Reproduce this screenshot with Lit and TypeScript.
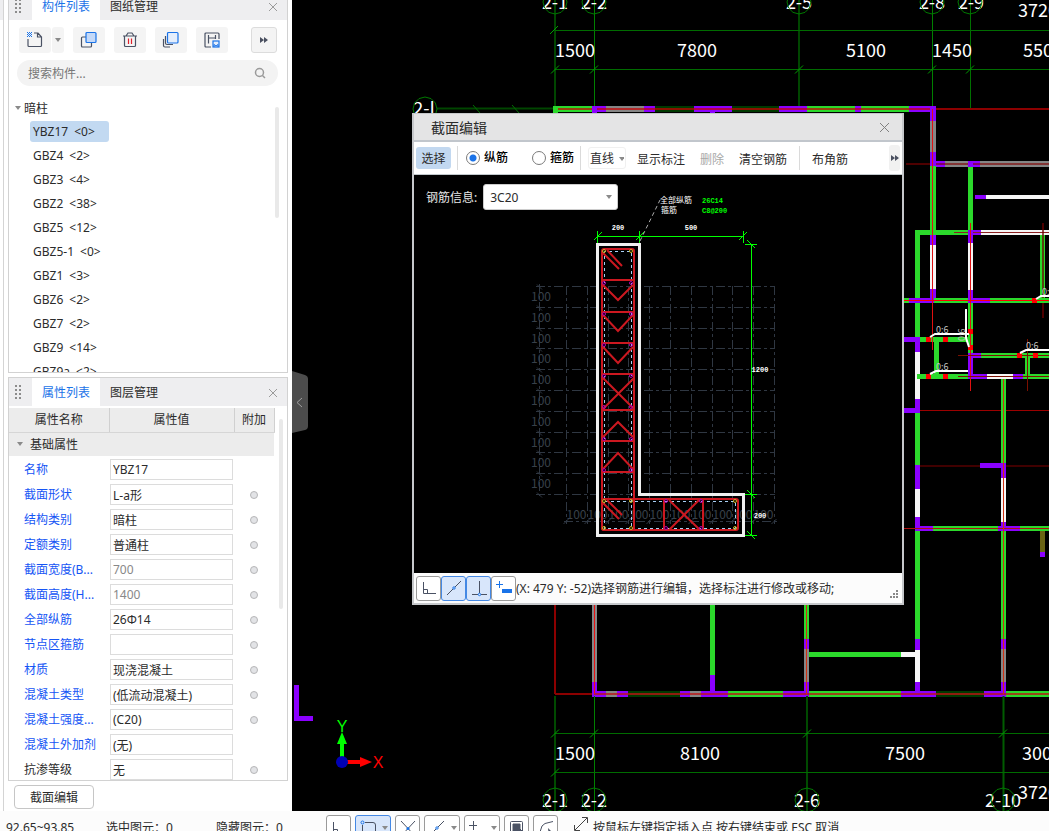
import { LitElement, html, svg, css, nothing } from "lit";
import { customElement, state } from "lit/decorators.js";
import { classMap } from "lit/directives/class-map.js";

const GREEN = "#2bd92b";
const PURPLE = "#8b00ff";
const WHITE = "#f6f6f6";
const GREY = "#858585";
const DARK = "#003a00";
const RED = "#ff0000";
const OLIVE = "#6a6414";

type Run = [number, number, string];

/** Horizontal wall band: runs of [x0, x1, colour] whose top edge is y. */
const hWall = (y: number, runs: Run[], t = 6) =>
  runs.map(([a, b, c]) => svg`<rect x=${a} y=${y} width=${b - a} height=${t} fill=${c}></rect>`);
/** Vertical wall band: runs of [y0, y1, colour] whose left edge is x. */
const vWall = (x: number, runs: Run[], t = 5) =>
  runs.map(([a, b, c]) => svg`<rect x=${x} y=${a} width=${t} height=${b - a} fill=${c}></rect>`);

const line = (x1: number, y1: number, x2: number, y2: number, c: string, w = 1) =>
  svg`<line x1=${x1} y1=${y1} x2=${x2} y2=${y2} stroke=${c} stroke-width=${w}></line>`;
const tick = (x: number, y: number, c = "#00a000") => line(x - 4, y + 4, x + 4, y - 4, c);
const bubble = (x: number, y: number) =>
  svg`<polygon fill="none" stroke="#007a00" points=${[0, 1, 2, 3, 4, 5, 6, 7, 8, 9, 10, 11]
    .map((i) => {
      const a = (Math.PI * i) / 6;
      return `${(x + 12 * Math.sin(a)).toFixed(1)},${(y + 12 * Math.cos(a)).toFixed(1)}`;
    })
    .join(" ")}></polygon>`;
const label = (x: number, y: number, t: string, anchor = "middle") =>
  svg`<text class="dim" x=${x} y=${y} text-anchor=${anchor}>${t}</text>`;

@customElement("plan-canvas")
export class PlanCanvas extends LitElement {
  static styles = css`
    :host { display: block; background: #000; overflow: hidden; }
    svg { display: block; width: 100%; height: 100%; }
    text { font-family: "Noto Sans CJK SC", sans-serif; }
    .dim { font-size: 18px; fill: #fff; }
    .note { font-size: 9px; fill: #c4c4c4; }
    .axis { font: 16px "Liberation Sans", sans-serif; }
  `;

  render() {
    return html`<svg role="img" aria-label="平面图">
      <g transform="translate(-292 0)">
        ${line(555, 0, 555, 110, "#004600", 2)} ${line(594.5, 0, 594.5, 110, "#008000")}
        ${line(799, 0, 799, 110, "#004600", 2)} ${line(932.5, 0, 932.5, 110, "#008000")}
        ${line(970.5, 0, 970.5, 108, "#007000")}
        ${line(555, 30.5, 1600, 30.5, "#006c00")} ${line(555, 69.5, 1600, 69.5, "#006c00")}
        ${tick(554, 30)} ${[555, 594, 799, 932, 970].map((x) => tick(x, 69.5))}
        ${label(555, 9, "2-1")} ${label(594, 9, "2-2")} ${label(799, 9, "2-5")}
        ${label(932, 9, "2-8")} ${label(971, 9, "2-9")} ${label(1018, 17, "37200", "start")}
        ${[555, 594, 799, 932, 970].map((x) => bubble(x, 2))}
        ${label(575, 57, "1500")} ${label(697, 57, "7800")} ${label(866, 57, "5100")}
        ${label(952, 57, "1450")} ${label(1023, 57, "5500", "start")}
        ${line(437, 108.5, 553, 108.5, "#004600", 2)}
        ${line(473, 105, 480, 113, "#007000")} ${line(512, 105, 519, 113, "#007000")}
        ${label(424, 115, "2-I")} ${bubble(425, 109)}

        ${hWall(106, [
          [553, 592, GREEN], [592, 606, PURPLE], [606, 644, GREY], [644, 655, PURPLE],
          [655, 694, DARK], [694, 732, PURPLE], [732, 779, DARK], [779, 807, PURPLE],
          [807, 855, GREEN], [855, 861, PURPLE], [861, 909, GREEN], [909, 936, PURPLE],
        ])}
        ${line(555, 109, 1600, 109, "rgba(200,0,0,.7)", 2)}
        ${vWall(553, [[106, 120, GREEN]])} ${vWall(592, [[106, 120, PURPLE]])} ${vWall(710, [[111, 120, PURPLE]])}

        ${vWall(915, [
          [230, 338, GREEN], [338, 352, PURPLE], [352, 399, WHITE], [399, 413, PURPLE],
          [413, 465, GREEN], [465, 489, PURPLE], [489, 517, WHITE], [517, 531, PURPLE],
          [531, 639, GREEN], [639, 650, PURPLE], [650, 682, WHITE], [682, 692, PURPLE],
        ])}
        ${hWall(161, [[930, 945, PURPLE], [945, 970, GREY], [970, 980, PURPLE], [980, 1600, GREY]])}
        ${line(906, 164, 1600, 164, "rgba(130,0,0,.6)", 2)}
        ${hWall(195, [[975, 986, PURPLE], [986, 1600, WHITE]], 4)}
        ${hWall(230, [[915, 968, GREEN], [968, 981, PURPLE], [981, 1600, WHITE]], 5)}
        ${vWall(1040, [[235, 299, GREEN]])}
        ${line(954, 232.5, 1600, 232.5, "#8c2020")} ${line(1043, 223, 1043, 318, "rgba(110,0,0,.7)", 2)}
        ${vWall(930, [
          [106, 121, PURPLE], [121, 152, GREY], [152, 166, PURPLE], [166, 235, GREEN],
          [235, 245, PURPLE], [245, 289, WHITE], [289, 303, PURPLE],
        ], 6)}
        ${hWall(298, [
          [904, 909, GREEN], [909, 934, PURPLE], [934, 968, GREEN], [968, 990, PURPLE],
          [990, 1600, GREEN],
        ], 5)}
        ${hWall(337, [[904, 920, PURPLE], [920, 972, GREEN]], 5)}
        ${vWall(934, [[342, 375, GREEN]])}
        ${hWall(353, [[970, 981, PURPLE], [981, 1600, GREEN]], 5)}
        ${vWall(1025, [[358, 375, GREEN]])}
        ${hWall(374, [
          [917, 968, GREEN], [968, 987, PURPLE], [987, 1013, WHITE], [1013, 1023, PURPLE],
          [1023, 1600, GREEN],
        ], 5)}
        ${vWall(968, [
          [161, 167, PURPLE], [167, 230, GREEN], [230, 243, PURPLE], [243, 290, WHITE],
          [290, 303, PURPLE], [303, 353, GREEN], [353, 379, PURPLE],
        ])}
        ${line(932.5, 109, 932.5, 350, "#e01010")} ${line(970.5, 223, 970.5, 391, "#e01010")}
        ${line(904, 300.5, 1600, 300.5, RED)}
        ${line(958, 355.5, 1600, 355.5, "#7c1000")} ${line(958, 376.5, 1600, 376.5, "#7c1000")}
        ${line(1027.5, 339, 1027.5, 391, "#7c1000")}
        ${[[926, 337], [943, 337], [926, 374], [943, 374], [1017, 353], [1033, 353], [1032, 298], [968, 329], [968, 345]].map(
          ([x, y]) => svg`<rect x=${x} y=${y} width="5" height="5" fill=${RED}></rect>`,
        )}
        <g fill="none" stroke="#fff" stroke-width="2">
          <path d="M930 337L935 334H969M930 374L936 371H968M1020 353L1026 350H1600M1036 299L1041 296H1600" />
          <path d="M966 309V338L969 347" />
        </g>
        <text class="note" x="936" y="333">0:6</text>
        <text class="note" x="936" y="370">0:6</text>
        <text class="note" x="1026" y="349">0:6</text>
        <text class="note" x="1042" y="295">0:6</text>
        <text class="note" transform="translate(965 341) rotate(-90)">0:6</text>

        ${hWall(408, [[904, 920, PURPLE]], 5)}
        ${line(920, 410.5, 1600, 410.5, "#9c0000")}
        ${line(920, 466, 1600, 466, "#400000", 2)}
        ${hWall(463, [[980, 1003, PURPLE]], 5)}
        ${hWall(526, [[915, 933, PURPLE], [933, 998, GREEN], [998, 1020, PURPLE], [1020, 1600, GREEN]], 5)}
        ${vWall(1001, [
          [379, 463, GREEN], [463, 478, PURPLE], [478, 522, WHITE], [522, 531, PURPLE],
          [531, 639, GREEN], [639, 649, PURPLE], [649, 682, GREY], [682, 696, PURPLE],
        ])}
        ${vWall(1040, [[531, 552, OLIVE], [552, 557, PURPLE]])}
        ${line(904, 528.5, 1600, 528.5, "#b01010")}

        ${line(555, 600, 555, 694, "#8c0000", 2)} ${line(555, 694, 594, 694, "#8c0000", 2)}
        ${vWall(592, [[600, 682, GREY], [682, 692, PURPLE]])}
        ${vWall(710, [[600, 675, GREEN], [675, 692, PURPLE]])}
        ${vWall(804, [[600, 639, GREEN], [639, 649, PURPLE], [649, 682, GREY], [682, 692, PURPLE]])}
        ${hWall(652, [[809, 901, GREEN], [901, 915, WHITE]], 5)}
        ${hWall(691, [
          [592, 606, PURPLE], [606, 617, GREY], [617, 628, PURPLE], [628, 680, DARK],
          [680, 690, PURPLE], [690, 701, GREY], [701, 728, PURPLE], [728, 783, GREEN],
          [783, 809, PURPLE], [809, 901, GREEN], [901, 936, PURPLE], [936, 984, DARK],
          [984, 1006, PURPLE], [1006, 1600, GREEN],
        ], 6)}
        ${line(594, 694, 1600, 694, "rgba(190,20,20,.75)", 2)}
        ${line(594.5, 600, 594.5, 694, "#ee1010")} ${line(806.5, 600, 806.5, 694, "#d03010")}
        ${line(1003.5, 379, 1003.5, 694, "#d03010")}

        ${line(555, 696, 555, 812, "#004a00", 2)} ${line(594.5, 696, 594.5, 812, "#008000")}
        ${line(807, 696, 807, 812, "#004a00", 2)} ${line(1003.5, 696, 1003.5, 812, "#005c00", 2)}
        ${line(555, 733.5, 1600, 733.5, "#006c00")} ${line(555, 772.5, 1600, 772.5, "#006c00")}
        ${[555, 594, 807, 1003].map((x) => tick(x, 733.5))} ${tick(555, 772.5)}
        ${label(575, 760, "1500")} ${label(700, 760, "8100")} ${label(905, 760, "7500")}
        ${label(1022, 760, "3000", "start")} ${label(1018, 799, "37200", "start")}
        ${label(555, 807, "2-1")} ${label(594, 807, "2-2")} ${label(807, 807, "2-6")} ${label(1003, 807, "2-10")}
        ${[555, 594, 807, 1003].map((x) => bubble(x, 800))}

        <path d="M294 685H299V716H313V721H294Z" fill=${PURPLE} />
        <rect x="340" y="743" width="4" height="15" fill="#00ff00" />
        <path d="M342 732L347 744H337Z" fill="#00ff00" />
        <rect x="346" y="760" width="15" height="4" fill=${RED} />
        <path d="M372 762L360 757V767Z" fill=${RED} />
        <circle cx="342" cy="762" r="6" fill="#0000b4" />
        <text class="axis" x="342" y="732" text-anchor="middle" fill="#00ff00">Y</text>
        <text class="axis" x="378" y="768" text-anchor="middle" fill=${RED}>X</text>

        <path d="M292 371L305 375Q308 376 308 379V426Q308 429 305 430L292 433Z" fill="#4c4c4c" />
        <path d="M302 398L297 402.500L302 407" fill="none" stroke="#a0a0a0" />
      </g>
    </svg>`;
  }
}

@customElement("section-drawing")
export class SectionDrawing extends LitElement {
  static styles = css`
    :host { display: block; }
    svg { display: block; width: 100%; height: 398px; }
    .grid { font: 12px "Noto Sans CJK SC", sans-serif; fill: #38404a; }
    .note { font: 8px "Noto Sans CJK SC", sans-serif; fill: #fff; }
    .tiny { font: bold 7px "Liberation Mono", monospace; fill: #fff; }
    .green { fill: #00ff00; }
  `;

  render() {
    const steps = [0, 1, 2, 3, 4, 5, 6, 7, 8, 9, 10];
    const gx = (i: number) => Math.round(566 + i * 20.8) + 0.5;
    const gy = (i: number) => Math.round(286 + i * 20.8) + 0.5;
    const bars = (pts: number[][], c: string) =>
      pts.map(([x, y]) => svg`<circle cx=${x} cy=${y} r="1.500" fill="none" stroke=${c}></circle>`);
    return html`<svg role="img" aria-label="截面图">
      <g transform="translate(-414 -175)">
        <g stroke="#2f3742" stroke-dasharray="9 3 3 3">
          ${steps.map((i) => svg`<line x1=${gx(i)} x2=${gx(i)} y1="286" y2="524"></line>`)}
          ${steps.map((i) => svg`<line x1="536" x2="775" y1=${gy(i)} y2=${gy(i)}></line>`)}
          <path d="M539.500 284V496M564 521.500H777" />
        </g>
        <g stroke="#2f3742">
          ${steps.map((i) => svg`<path d=${`M537 ${gy(i) - 2}l5 5M${gx(i) - 3} 524l5 -5`}></path>`)}
        </g>
        ${steps.slice(0, 10).map(
          (i) => svg`<text class="grid" x="531" y=${gy(i) + 14}>100</text>
            <text class="grid" x=${gx(i)} y="519">100</text>`,
        )}

        <g fill="none" stroke="#a8d0f4" stroke-dasharray="3 3">
          <path d="M604.500 529V251.500H631.500V529M605 501.500H735.500V528.500H605" />
        </g>
        <g fill="none" stroke="#cc1820" stroke-width="2">
          <rect x="602" y="249" width="32" height="281" rx="2" />
          <rect x="602" y="499" width="136" height="31" rx="2" />
          <path d="M602 280H634M602 312H634M602 343H634M602 374H634M602 410H634M602 441H634M602 472H634" />
          <path d="M603 285L618 300L633 285M603 315L618 331L633 315M603 347L618 363L633 347" />
          <path d="M603 378L634 409M634 378L603 409M603 437L618 422L633 437M603 469L618 453L633 469" />
          <path d="M603 253L619 269M607 250L622 266M603 503L619 519M607 500L622 515" />
          <path d="M664 499V530M703 499V530M669 500L700 530M700 499L669 530" />
        </g>
        ${bars([
          [604, 283], [631, 283], [604, 314], [631, 314], [604, 345], [631, 345], [604, 376], [631, 376],
          [604, 407], [631, 407], [604, 439], [631, 439], [604, 470], [631, 470],
          [666, 501], [701, 501], [666, 528], [701, 528],
        ], "#b000b0")}
        ${bars([
          [604, 251], [631, 251], [604, 501], [631, 501], [604, 528], [631, 528], [735, 501], [735, 528],
        ], "#c8b020")}
        <path d="M597.500 244.500H639.500V494.500H743.500V535.500H597.500Z" fill="none" stroke="#f0f0f0" stroke-width="3" />

        <g stroke="#00ff00">
          <path d="M597 236.500H744M597.500 231V243M639.500 231V243M743.500 231V243" />
          <path d="M594 240L602 232M636 240L644 232M739 240L747 232" />
          <path d="M751.500 244V536M745 244.500H757M745 494.500H757M745 535.500H757" />
          <path d="M747 240L755 248M747 490L755 498M747 531L755 539" />
        </g>
        <path d="M640 241L660 200" stroke="#aaa" stroke-dasharray="4 3" />
        <g text-anchor="middle" class="tiny">
          <text x="618" y="230">200</text>
          <text x="691" y="230">500</text>
          <text x="760" y="372">1200</text>
          <text x="760" y="518">200</text>
        </g>
        <text class="note" x="660" y="203">全部纵筋</text>
        <text class="note" x="661" y="213">箍筋</text>
        <text class="tiny green" x="702" y="203">26C14</text>
        <text class="tiny green" x="702" y="213">C8@200</text>
      </g>
    </svg>`;
  }
}

const caret = html`<svg class="caret" width="6" height="4"><path d="M0 0H6L3 4Z" fill="#8a8a8a" /></svg>`;
const closeIcon = html`<svg width="10" height="10"><path d="M1 1L9 9M9 1L1 9" stroke="#9a9a9a" /></svg>`;
const moreIcon = html`<svg width="8" height="6"><path d="M0 0L4 3L0 6ZM4 0L8 3L4 6Z" fill="#4a5060" /></svg>`;
const grip = html`<svg width="6" height="14">
  ${[0, 4, 8, 12].map((y) => svg`<path d=${`M0 ${y}h2v2h-2zM4 ${y}h2v2h-2z`} fill="#8c8c8c"></path>`)}
</svg>`;

const INK = "#4a5264";
const icons = {
  add: html`<svg width="18" height="18" fill="none" stroke=${INK} stroke-width="1.200">
    <path d="M2 8V14.500Q2 15.500 3 15.500H14.500Q15.500 15.500 15.500 14.500V6L12 2H8M11.500 2V6H15.500" />
    <path stroke="none" fill="#1a73e8" d="M1 1h1v1h-1zM3 1h1v1h-1zM5 1h1v1h-1zM2 2h1v1h-1zM4 2h1v1h-1zM1 3h1v1h-1zM3 3h1v1h-1zM5 3h1v1h-1zM2 4h1v1h-1zM4 4h1v1h-1zM1 5h1v1h-1zM3 5h1v1h-1zM5 5h1v1h-1z" />
  </svg>`,
  copy: html`<svg width="18" height="18" fill="none" stroke-width="1.200">
    <rect x="1.500" y="6" width="10" height="10" rx="1" stroke=${INK} />
    <rect x="6" y="1.500" width="10" height="10" rx="1" stroke="#1a73e8" fill="#c4d9f8" />
  </svg>`,
  trash: html`<svg width="18" height="18" fill="none" stroke=${INK} stroke-width="1.200">
    <path d="M2 5H16M5 5L7 2H11L13 5M3.500 5V14.500Q3.500 15.500 4.500 15.500H13.500Q14.500 15.500 14.500 14.500V5" />
    <path d="M7.500 7.500V13M10.500 7.500V13" stroke="#e0202c" />
  </svg>`,
  layers: html`<svg width="18" height="18" fill="none" stroke=${INK} stroke-width="1.200">
    <path d="M3.500 5V12Q3.500 13.500 5 13.500H11M1.500 8V14.500Q1.500 16 3 16H8" />
    <rect x="5.500" y="1.500" width="10.500" height="10.500" rx="1" stroke="#1a73e8" fill="#e4eefc" />
  </svg>`,
  store: html`<svg width="18" height="18" fill="none" stroke=${INK} stroke-width="1.200">
    <path d="M8 16H3Q2 16 2 15V3Q2 2 3 2H15Q16 2 16 3V8M5.500 4V12.500M12.500 4V8M5.500 7H12.500" />
    <rect x="10" y="10" width="6" height="6" stroke="#1a73e8" fill="#e4eefc" />
    <path d="M11 16V13.500L13 15L15 13.500V16" stroke="#1a73e8" stroke-width="1" />
  </svg>`,
  ortho: html`<svg width="18" height="18" fill="none" stroke=${INK}><path d="M3.500 3V14.500H16M3.500 10.500H7.500V14.500" /></svg>`,
  slash: html`<svg width="18" height="18" fill="none" stroke=${INK}>
    <path d="M2 16L8 10M10 8L16 2" /><circle cx="9" cy="9" r="1.200" stroke="#1a73e8" />
  </svg>`,
  perp: html`<svg width="18" height="18" fill="none" stroke=${INK}>
    <path d="M9.500 2V14M2 15.500H8M11 15.500H17" /><circle cx="9.500" cy="15.500" r="1.200" stroke="#1a73e8" />
  </svg>`,
  plusBar: html`<svg width="18" height="18"><path d="M1 5.500H8M4.500 2V9" stroke="#1a73e8" /><path d="M7 10H17V14H7Z" fill="#1a73e8" /></svg>`,
  rect: html`<svg width="18" height="18" fill="none" stroke=${INK}>
    <path d="M3.500 6V18M6 3.500H14Q16.500 3.500 16.500 6V18" /><circle cx="3.500" cy="3.500" r="1.500" stroke="#1a73e8" />
  </svg>`,
  cross: html`<svg width="18" height="18" stroke=${INK}><path d="M2 2L16 17M16 2L2 17" /><circle cx="9" cy="9.500" r="1.500" fill="#1a73e8" stroke="none" /></svg>`,
  plusGrey: html`<svg width="18" height="18"><path d="M1 6.500H9M5.500 2V11" stroke=${INK} /><path d="M7 12H17V16H7Z" fill=${INK} /></svg>`,
  pick: html`<svg width="18" height="18" fill="none" stroke=${INK}>
    <rect x="2.500" y="2.500" width="12" height="12" rx="1" /><path d="M5 5H12V13H5Z" fill=${INK} /><path d="M12 10L17 15L14 15L13 18Z" fill=${INK} />
  </svg>`,
  poly: html`<svg width="18" height="18" fill="none" stroke=${INK}>
    <path d="M2 16L5 7L8 4.500L16 2.500" /><path d="M11 9L17 15L14 15L12 18Z" fill=${INK} stroke="none" />
  </svg>`,
};

interface Prop { name: string; value: string; dim?: boolean; plain?: boolean; dot?: boolean }
const PROPS: Prop[] = [
  { name: "名称", value: "YBZ17", dot: false },
  { name: "截面形状", value: "L-a形" },
  { name: "结构类别", value: "暗柱" },
  { name: "定额类别", value: "普通柱" },
  { name: "截面宽度(B...", value: "700", dim: true },
  { name: "截面高度(H...", value: "1400", dim: true },
  { name: "全部纵筋", value: "26Φ14" },
  { name: "节点区箍筋", value: "" },
  { name: "材质", value: "现浇混凝土" },
  { name: "混凝土类型", value: "(低流动混凝土)" },
  { name: "混凝土强度...", value: "(C20)" },
  { name: "混凝土外加剂", value: "(无)", dot: false },
  { name: "抗渗等级", value: "无", plain: true },
];
const MEMBERS: [string, number][] = [
  ["YBZ17", 0], ["GBZ4", 2], ["GBZ3", 4], ["GBZ2", 38], ["GBZ5", 12], ["GBZ5-1", 0],
  ["GBZ1", 3], ["GBZ6", 2], ["GBZ7", 2], ["GBZ9", 14], ["GBZ9a", 2],
];

@customElement("app-root")
export class AppRoot extends LitElement {
  @state() private picked = "YBZ17";

  static styles = css`
    :host {
      display: flex; flex-direction: column; height: 100vh; overflow: hidden; background: #fff;
      font: 12px/16px "Noto Sans", "Noto Sans CJK SC", sans-serif; color: #2b2b2b;
    }
    * { box-sizing: border-box; }
    button, input, select { font: inherit; color: inherit; margin: 0; padding: 0; border: 0; background: none; }
    button { display: inline-flex; align-items: center; justify-content: center; white-space: nowrap; }
    svg { display: block; flex: none; }
    .work { flex: 1; min-height: 0; display: flex; }
    .rail { flex: none; width: 4px; border-right: 1px solid #d4d4d4; background: linear-gradient(#eeeef0 20px, #fff 20px); }
    .side { flex: none; width: 288px; padding: 0 4px; display: flex; flex-direction: column; overflow: hidden; }
    .panel { border: 1px solid #d2d2d2; display: flex; flex-direction: column; overflow: hidden; }
    .members { flex: none; height: 382px; margin-top: -9px; }
    .props { flex: 1; min-height: 0; margin-top: 4px; }
    .head { flex: none; display: flex; height: 28px; background: #eeeef0; align-items: stretch; }
    .head > svg { margin: 7px 11px 0 6px; }
    .tab { width: 68px; padding-top: 2px; }
    .tab.on { background: #fff; color: #1a73e8; }
    .close { margin-left: auto; width: 28px; padding-top: 2px; }
    .tools { display: flex; gap: 9px; padding: 7px 10px; }
    .tool { width: 32px; height: 26px; border-radius: 3px; background: #f4f4f4; }
    .split { display: flex; gap: 1px; }
    .split .drop { width: 12px; background: #f4f4f4; border-radius: 3px; }
    .tools .more { width: 26px; border: 1px solid #dcdcdc; margin-left: auto; }
    .search { display: flex; align-items: center; height: 26px; margin: 0 9px 0 8px; padding: 0 12px 0 11px; border-radius: 13px; background: #f3f3f3; }
    .search input { flex: 1; min-width: 0; outline: 0; padding-top: 2px; }
    .search input::placeholder { color: #777; opacity: 1; }
    .scroll { position: relative; flex: 1; min-height: 0; overflow: hidden; }
    .bar { position: absolute; right: 8px; top: 21px; width: 4px; height: 111px; border-radius: 2px; background: #e9e9e9; }
    .props .bar { right: 4px; top: 13px; height: 190px; }
    .group { display: flex; align-items: center; gap: 3px; height: 23px; padding-left: 6px; margin-top: 10px; }
    .group span { padding-top: 2px; }
    .list { list-style: none; margin: 0; padding: 0 0 0 21px; }
    .list li { height: 24px; padding: 2px 0; }
    .member { height: 21px; gap: 6px; padding: 0 3px; border-radius: 3px; justify-content: flex-start; }
    .member.on { background: #c2d9f1; width: 79px; }
    table { width: 265px; border-collapse: collapse; table-layout: fixed; margin-top: 2px; }
    th { font-weight: 400; height: 24px; padding: 1px 0 0; background: #ececec; border-right: 1px solid #d0d0d0; border-bottom: 1px solid #d6d6d6; text-align: center; }
    td { height: 25px; padding: 0; }
    .cat td { height: 24px; background: #ececec; }
    .cat div { display: flex; align-items: center; gap: 7px; padding-left: 8px; }
    .cat span { padding-top: 1px; }
    .spacer td { height: 1px; }
    td label { display: block; padding-left: 15px; color: #1555f5; white-space: nowrap; }
    td label.plain { color: #2b2b2b; }
    td input { display: block; width: 123px; height: 21px; margin-left: 1px; padding: 0 2px; border: 1px solid #dcdcdc; background: #fff; }
    td input.dim { color: #888; }
    .dot { display: block; width: 8px; height: 8px; margin: 0 auto; border: 1px solid #b6b6b8; border-radius: 50%; background: #e2e3e6; }
    .edit { flex: none; align-self: flex-start; width: 80px; height: 24px; margin: 4px 0 2px 6px; padding-top: 1px; border: 1px solid #c6c6c6; border-radius: 4px; background: #fff; }
    .stage { flex: 1; min-width: 0; position: relative; display: grid; }
    .dialog { position: absolute; left: 120px; top: 113px; width: 492px; border: solid #c6c8cb; border-width: 1px 2px 2px; background: #fff; }
    .title { display: flex; align-items: center; justify-content: space-between; height: 28px; padding: 0 12px 0 17px; border-bottom: 2px solid #c1c6cc; background: #e4e4e5; font-size: 14px; line-height: 20px; }
    .title span { padding-top: 2px; }
    .ribbon { display: flex; align-items: center; height: 33px; padding: 0 2px; border-bottom: 1px solid #c1c8cc; }
    .pickBtn { width: 35px; height: 22px; padding-top: 2px; border-radius: 3px; background: #c2d8f0; }
    .sep { width: 1px; height: 24px; margin: 0 7px 0 6px; background: #dadada; }
    .radio { display: flex; align-items: center; gap: 4px; margin-right: 24px; color: #000; font-weight: 500; }
    .radio.first { margin-left: 1px; }
    .radio.last { margin-right: 0; }
    .radio input { appearance: none; width: 14px; height: 14px; border: 1px solid #7a7a7a; border-radius: 50%; background: #fff; }
    .radio input:checked { background: radial-gradient(circle, #1a73e8 3px, #fff 4px); }
    .lineBtn { gap: 5px; height: 22px; padding: 2px 1px 0; border: 1px solid #f0f0f0; border-radius: 3px; margin-right: 11px; }
    .lineBtn .caret { width: 5px; }
    .word { margin-right: 15px; padding-top: 3px; }
    .word.off { color: #a8a8a8; }
    .word.end { margin-right: 6px; }
    .word.corner { margin-left: 5px; }
    .ribbon .more { width: 11px; height: 26px; margin-left: auto; border-radius: 3px; background: #f1f1f1; }
    .board { display: grid; background: #000; }
    .board > * { grid-area: 1 / 1; }
    .info { display: flex; align-items: center; gap: 6px; align-self: start; justify-self: start; z-index: 1; padding: 9px 12px; color: #e6e6e6; }
    .info label { padding-top: 2px; }
    .combo { display: flex; align-items: center; position: relative; }
    .combo select { appearance: none; width: 135px; height: 26px; padding: 2px 6px 0; border-radius: 3px; background: #fff; border: 1px solid #ccc; color: #2b2b2b; }
    .combo .caret { position: absolute; right: 6px; }
    .foot { display: flex; align-items: center; height: 30px; padding: 0 2px; background: #fcfcfc; }
    .foot span { padding-top: 2px; }
    .foot .grip { margin: 12px 2px 0 auto; }
    .snap { width: 25px; height: 25px; border: 1px solid #9a9a9a; border-radius: 3px; background: #fff; }
    .snap.on { background: #d8e6fb; border-color: #4488e4; }
    .status { flex: none; height: 20px; display: flex; align-items: flex-start; padding-top: 4px; background: #fcfcfc; overflow: hidden; white-space: nowrap; }
    .status > span { padding-top: 5px; }
    .range { width: 100px; padding-left: 6px; }
    .count { width: 110px; padding-left: 6px; }
    .snaps { display: flex; gap: 4px; margin: 0 15px 0 6px; }
    .snap.wide { width: 36px; gap: 5px; padding-left: 1px; }
    .prompt { margin-left: 4px; }
  `;

  private head(a: string, b: string) {
    return html`<div class="head" role="tablist">
      ${grip}
      <button class="tab on" role="tab" aria-selected="true">${a}</button>
      <button class="tab" role="tab" aria-selected="false">${b}</button>
      <button class="close" aria-label="关闭">${closeIcon}</button>
    </div>`;
  }

  private snap(icon: unknown, name: string, on = false, wide = false) {
    return html`<button class=${classMap({ snap: true, on, wide })} aria-label=${name}>${icon}${wide ? caret : nothing}</button>`;
  }

  private members() {
    return html`<section class="panel members">
      ${this.head("构件列表", "图纸管理")}
      <div class="tools">
        <div class="split">
          <button class="tool" aria-label="新建">${icons.add}</button>
          <button class="drop" aria-label="新建选项">${caret}</button>
        </div>
        <button class="tool" aria-label="复制">${icons.copy}</button>
        <button class="tool" aria-label="删除">${icons.trash}</button>
        <button class="tool" aria-label="层间复制">${icons.layers}</button>
        <button class="tool" aria-label="存档">${icons.store}</button>
        <button class="tool more" aria-label="更多">${moreIcon}</button>
      </div>
      <label class="search">
        <input type="text" placeholder="搜索构件..." aria-label="搜索构件" />
        <svg width="12" height="12" fill="none" stroke="#9a9a9a" stroke-width="1.500"><circle cx="5.500" cy="5.500" r="4" /><path d="M8.500 8.500L11 11" /></svg>
      </label>
      <div class="scroll">
        <div class="group">${caret}<span>暗柱</span></div>
        <ul class="list">
          ${MEMBERS.map(
            ([n, c]) => html`<li>
              <button class=${classMap({ member: true, on: n === this.picked })} @click=${() => (this.picked = n)}>
                <span>${n}</span><span>&lt;${c}&gt;</span>
              </button>
            </li>`,
          )}
        </ul>
        <div class="bar"></div>
      </div>
    </section>`;
  }

  private props() {
    return html`<section class="panel props">
      ${this.head("属性列表", "图层管理")}
      <div class="scroll">
        <table>
          <colgroup><col style="width:100px" /><col style="width:125px" /><col style="width:40px" /></colgroup>
          <thead><tr><th>属性名称</th><th>属性值</th><th>附加</th></tr></thead>
          <tbody>
            <tr class="cat"><td colspan="3"><div>${caret}<span>基础属性</span></div></td></tr>
            <tr class="spacer"><td colspan="3"></td></tr>
            ${PROPS.map(
              (p, i) => html`<tr>
                <td><label class=${p.plain ? "plain" : ""} for=${"p" + i}>${p.name}</label></td>
                <td><input id=${"p" + i} class=${p.dim ? "dim" : ""} .value=${p.value} /></td>
                <td>${p.dot === false ? nothing : html`<span class="dot"></span>`}</td>
              </tr>`,
            )}
          </tbody>
        </table>
        <div class="bar"></div>
      </div>
    </section>`;
  }

  private dialog() {
    return html`<div class="dialog" role="dialog" aria-label="截面编辑">
      <div class="title">
        <span>截面编辑</span>
        <button aria-label="关闭"><svg width="11" height="11"><path d="M1 1L10 10M10 1L1 10" stroke="#808080" /></svg></button>
      </div>
      <div class="ribbon">
        <button class="pickBtn">选择</button>
        <i class="sep"></i>
        <label class="radio first"><input type="radio" name="bar" checked />纵筋</label>
        <label class="radio last"><input type="radio" name="bar" />箍筋</label>
        <i class="sep"></i>
        <button class="lineBtn">直线${caret}</button>
        <button class="word">显示标注</button>
        <button class="word off" disabled>删除</button>
        <button class="word end">清空钢筋</button>
        <i class="sep"></i>
        <button class="word corner">布角筋</button>
        <button class="more" aria-label="更多">${moreIcon}</button>
      </div>
      <div class="board">
        <div class="info">
          <label for="rebar">钢筋信息:</label>
          <span class="combo">
            <select id="rebar"><option>3C20</option></select>
            ${caret}
          </span>
        </div>
        <section-drawing></section-drawing>
      </div>
      <div class="foot">
        ${this.snap(icons.ortho, "正交")}${this.snap(icons.slash, "中点", true)}${this.snap(icons.perp, "垂点", true)}${this.snap(icons.plusBar, "动态输入")}
        <span>(X: 479 Y: -52)选择钢筋进行编辑，选择标注进行修改或移动;</span>
        <svg class="grip" width="8" height="8"><path fill="#888" d="M6 0h2v2h-2zM3 3h2v2h-2zM6 3h2v2h-2zM0 6h2v2h-2zM3 6h2v2h-2zM6 6h2v2h-2z" /></svg>
      </div>
    </div>`;
  }

  render() {
    return html`
      <div class="work">
        <div class="rail"></div>
        <aside class="side">
          ${this.members()} ${this.props()}
          <button class="edit">截面编辑</button>
        </aside>
        <main class="stage">
          <plan-canvas></plan-canvas>
          ${this.dialog()}
        </main>
      </div>
      <footer class="status">
        <span class="range">92.65~93.85</span>
        <span class="count">选中图元：0</span>
        <span class="count">隐藏图元：0</span>
        <div class="snaps">
          ${this.snap(icons.ortho, "正交")}${this.snap(icons.rect, "矩形", true, true)}
          ${this.snap(icons.cross, "交点")}${this.snap(icons.slash, "中点", false, true)}${this.snap(icons.plusGrey, "偏移", false, true)}
          ${this.snap(icons.pick, "拾取")}${this.snap(icons.poly, "多段线")}
        </div>
        <svg width="16" height="18" fill="none" stroke="#444"><path d="M2 15L14 3M9 2.500H14.500V8M1.500 10V15.500H7" /></svg>
        <span class="prompt">按鼠标左键指定插入点 按右键结束或 ESC 取消</span>
      </footer>
    `;
  }
}
